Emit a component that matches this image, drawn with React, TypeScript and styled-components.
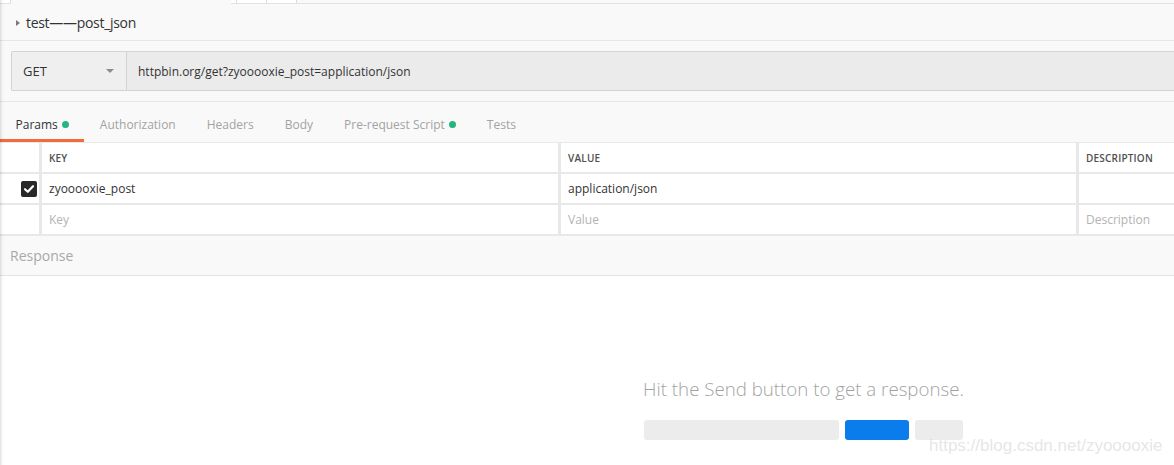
import React from 'react';
import styled, { createGlobalStyle } from 'styled-components';

type Param = { key: string; value: string; description: string; enabled: boolean };

const params: Param[] = [{ key: 'zyooooxie_post', value: 'application/json', description: '', enabled: true }];

const tabs = [
  { label: 'Params', dot: true },
  { label: 'Authorization', dot: false },
  { label: 'Headers', dot: false },
  { label: 'Body', dot: false },
  { label: 'Pre-request Script', dot: true },
  { label: 'Tests', dot: false },
];

const GlobalStyle = createGlobalStyle`
  html, body {
    margin: 0;
    padding: 0;
    background: #f9f9f9;
  }
  body {
    font-family: 'Open Sans', 'Liberation Sans', sans-serif;
    color: #333;
  }
`;

const App: React.FC = () => {
  return (
    <Page>
      <GlobalStyle />
      <TabStrip>
        <TabStub $width={10} />
        <TabGap $width={220} />
        <TabStub $width={5} />
        <TabStub $width={29} />
        <TabStub $width={29} />
        <TabRest />
      </TabStrip>

      <TitleRow>
        <Caret />
        <Title>test——post_json</Title>
      </TitleRow>

      <UrlSection>
        <UrlBar>
          <MethodSelect>
            <span>GET</span>
            <DropArrow />
          </MethodSelect>
          <UrlInput>httpbin.org/get?zyooooxie_post=application/json</UrlInput>
        </UrlBar>
      </UrlSection>

      <TabRow>
        {tabs.map((t, i) => (
          <Tab key={t.label} $active={i === 0}>
            {t.label}
            {t.dot && <Dot />}
          </Tab>
        ))}
      </TabRow>

      <ParamGrid>
        <Cell />
        <HeadCell>KEY</HeadCell>
        <HeadCell>VALUE</HeadCell>
        <HeadCell>DESCRIPTION</HeadCell>
        {params.map((p) => (
          <React.Fragment key={p.key}>
            <CheckCell>
              <CheckBox>
                <svg width="12" height="12" viewBox="0 0 12 12">
                  <path d="M2 6.2 L4.8 8.8 L10 3.2" fill="none" stroke="#fff" strokeWidth="2.2" strokeLinecap="round" strokeLinejoin="round" />
                </svg>
              </CheckBox>
            </CheckCell>
            <Cell>{p.key}</Cell>
            <Cell>{p.value}</Cell>
            <Cell>{p.description}</Cell>
          </React.Fragment>
        ))}
        <Cell />
        <Cell $placeholder>Key</Cell>
        <Cell $placeholder>Value</Cell>
        <Cell $placeholder>Description</Cell>
      </ParamGrid>

      <ResponseBar>Response</ResponseBar>

      <ResponseBody>
        <EmptyState>
          <EmptyText>Hit the Send button to get a response.</EmptyText>
          <SkeletonRow>
            <Skeleton $width={195} />
            <Skeleton $width={64} $blue />
            <Skeleton $width={48} />
          </SkeletonRow>
        </EmptyState>
      </ResponseBody>

      <Watermark>https://blog.csdn.net/zyooooxie</Watermark>
      <EdgeShadow />
    </Page>
  );
};

export default App;

const Page = styled.div`
  position: relative;
  width: 1174px;
  height: 465px;
  overflow: hidden;
  display: flex;
  flex-direction: column;
  background: #f9f9f9;
`;

const EdgeShadow = styled.div`
  position: absolute;
  top: 0;
  bottom: 0;
  left: 0;
  width: 4px;
  pointer-events: none;
  background: linear-gradient(to right, rgba(0, 0, 0, 0.12), rgba(0, 0, 0, 0.03) 50%, rgba(0, 0, 0, 0));
`;

const TabStrip = styled.div`
  display: flex;
  height: 4px;
`;

const TabStub = styled.div<{ $width: number }>`
  width: ${(p) => p.$width}px;
  background: #fff;
  border-right: 1px solid #dcdcdc;
  border-bottom: 1px solid #e2e2e2;
`;

const TabGap = styled.div<{ $width: number }>`
  width: ${(p) => p.$width}px;
`;

const TabRest = styled.div`
  flex: 1;
  border-bottom: 1px solid #e2e2e2;
`;

const TitleRow = styled.div`
  display: flex;
  align-items: center;
  height: 36px;
  padding-left: 16px;
  border-bottom: 1px solid #e6e6e6;
`;

const Caret = styled.span`
  width: 0;
  height: 0;
  border-top: 3.5px solid transparent;
  border-bottom: 3.5px solid transparent;
  border-left: 4px solid #7a7a7a;
  margin-right: 6px;
  margin-top: 1px;
`;

const Title = styled.div`
  font-size: 14px;
  font-weight: 500;
  color: #333;
  letter-spacing: -0.3px;
`;

const UrlSection = styled.div`
  padding: 10px 0 10px 11px;
  border-bottom: 1px solid #e6e6e6;
`;

const UrlBar = styled.div`
  display: flex;
  height: 38px;
  border: 1px solid #d3d3d3;
  border-right: none;
  border-radius: 2px 0 0 2px;
  background: #ebebeb;
`;

const MethodSelect = styled.div`
  display: flex;
  align-items: center;
  justify-content: space-between;
  padding: 0 12px 0 11px;
  width: 91px;
  background: #efefef;
  border-right: 1px solid #d3d3d3;
  font-size: 13px;
  color: #333;
`;

const DropArrow = styled.span`
  width: 0;
  height: 0;
  border-left: 4px solid transparent;
  border-right: 4px solid transparent;
  border-top: 4px solid #8c8c8c;
`;

const UrlInput = styled.div`
  flex: 1;
  display: flex;
  align-items: center;
  padding-left: 11px;
  font-size: 12px;
  color: #333;
`;

const TabRow = styled.div`
  display: flex;
  height: 40px;
`;

const Tab = styled.div<{ $active: boolean }>`
  display: flex;
  align-items: center;
  gap: 4px;
  padding: 8px 15.5px 0;
  font-size: 12px;
  color: ${(p) => (p.$active ? '#333' : '#a3a3a3')};
  border-bottom: 3px solid ${(p) => (p.$active ? '#f26b3a' : 'transparent')};
`;

const Dot = styled.span`
  width: 7px;
  height: 7px;
  border-radius: 50%;
  background: #26b47f;
`;

const ParamGrid = styled.div`
  display: grid;
  grid-template-columns: 39px 516px 515px 1fr;
  grid-auto-rows: 29px;
  gap: 2px 3px;
  padding: 1px 0 2px;
  background: #e8e8e8;
`;

const Cell = styled.div<{ $placeholder?: boolean }>`
  display: flex;
  align-items: center;
  padding-left: 7px;
  background: #fff;
  font-size: 12px;
  color: ${(p) => (p.$placeholder ? '#b3b3b3' : '#333')};
`;

const HeadCell = styled(Cell)`
  font-size: 10px;
  font-weight: 600;
  color: #505050;
  letter-spacing: 0.2px;
`;

const CheckCell = styled(Cell)`
  justify-content: flex-end;
  padding: 0 2px 0 0;
`;

const CheckBox = styled.div`
  width: 16px;
  height: 16px;
  border-radius: 2px;
  background: #282828;
  display: flex;
  align-items: center;
  justify-content: center;
`;

const ResponseBar = styled.div`
  display: flex;
  align-items: center;
  height: 39px;
  padding-left: 10px;
  font-size: 14px;
  color: #a8a8a8;
  border-bottom: 1px solid #e4e4e4;
`;

const ResponseBody = styled.div`
  flex: 1;
  display: flex;
  justify-content: center;
  padding: 101px 0 0 433px;
  background: #fff;
`;

const EmptyState = styled.div`
  display: flex;
  flex-direction: column;
  align-items: center;
`;

const EmptyText = styled.div`
  font-size: 18.7px;
  font-weight: 300;
  color: #a3a3a3;
  line-height: 24px;
`;

const SkeletonRow = styled.div`
  display: flex;
  gap: 6px;
  margin-top: 19px;
`;

const Skeleton = styled.div<{ $width: number; $blue?: boolean }>`
  width: ${(p) => p.$width}px;
  height: 20px;
  border-radius: 3px;
  background: ${(p) => (p.$blue ? '#0b7cec' : '#ececec')};
`;

const Watermark = styled.div`
  position: absolute;
  left: 929px;
  top: 436px;
  font-family: 'Liberation Sans', Arial, sans-serif;
  font-size: 17px;
  color: rgba(190, 190, 190, 0.4);
  pointer-events: none;
`;
